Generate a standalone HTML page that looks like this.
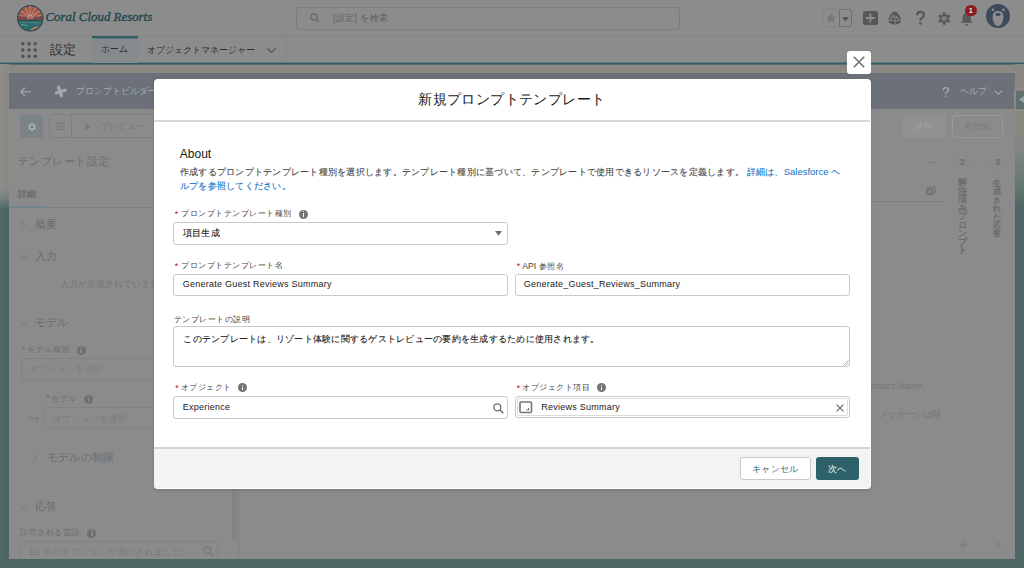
<!DOCTYPE html>
<html><head><meta charset="utf-8">
<style>
*{box-sizing:border-box;margin:0;padding:0}
html,body{width:1024px;height:568px;overflow:hidden}
body{position:relative;background:#8c8c8c;font-family:"Liberation Sans",sans-serif;color:#444}
.a{position:absolute;white-space:nowrap}
svg{position:absolute;overflow:visible}
/* backdrop page (already dimmed colours) */
#hdr{left:0;top:0;width:1024px;height:36px;background:#8c8c8c;border-bottom:1px solid #838383}
#nav{left:0;top:36px;width:1024px;height:29px;background:#8c8c8c}
#pagebg{left:0;top:64px;width:1024px;height:504px;background:linear-gradient(#8a8883 0px,#898782 120px,#6f7a75 135px,#4d6663 150px,#4d6663 504px)}
#leftstrip{left:0;top:64px;width:9px;height:504px;background:linear-gradient(90deg,rgba(255,255,255,.03),rgba(255,255,255,0) 4px),linear-gradient(#8c8a86 0,#8b8985 124px,#7a827f 133px,#5e726e 140px,#4e6663 145px,#4d6663 504px)}
#rightstrip{left:1015px;top:64px;width:9px;height:504px;background:linear-gradient(#8a8883 0,#898782 68px,#828581 85px,#717e7a 105px,#617470 125px,#526a66 138px,#4d6663 146px,#4d6663 504px)}
#builder{left:8.5px;top:73px;width:1006.5px;height:486px;background:#8b8b8b}
#bhdr{left:8.5px;top:73px;width:1006.5px;height:36px;background:#6b7079}
.dimtxt{color:#6c6c6c}
.btxt{color:#a9abae}
/* modal */
#modal{left:153.8px;top:79px;width:716.8px;height:409.5px;background:#fff;border-radius:4px;overflow:hidden;box-shadow:0 1px 3px rgba(0,0,0,.15)}
#mhdr{left:0;top:0;width:716px;height:43px;border-bottom:2px solid #d8d8d8}
#mfoot{left:0;top:367.8px;width:716.5px;height:41.7px;background:#f3f3f3;border-top:2px solid #d3d3d3}
.lbl{font-size:8px;letter-spacing:.5px;color:#444;line-height:10px}
.L{letter-spacing:0;font-size:8.6px}
.j9{font-size:9px;letter-spacing:.25px}
.e{font-size:9.5px;letter-spacing:0}
.req{color:#ba0517;font-size:8.6px;margin-top:1px}
.inp{position:absolute;border:1px solid #c9c9c9;border-radius:3px;background:#fff}
.val{font-size:9px;letter-spacing:.25px;color:#181818;line-height:12px}
.info{position:absolute;width:9px;height:9px;border-radius:50%;background:#747474}
.info:after{content:"";position:absolute;left:3.9px;top:3.6px;width:1.3px;height:3.5px;background:#fff}
.info:before{content:"";position:absolute;left:3.9px;top:1.8px;width:1.3px;height:1.2px;background:#fff}
.bi:before,.bi:after{background:#8b8b8b}
#modal .j9,#modal .val{-webkit-text-stroke:.1px currentColor}
#modal .e{-webkit-text-stroke:0}
</style></head><body>

<!-- ===== Global header ===== -->
<div id="hdr" class="a"></div>
<div id="nav" class="a"></div>
<div id="pagebg" class="a"></div>
<div class="a" style="left:0;top:62px;width:1024px;height:3px;background:linear-gradient(#5b7b7f 0,#5b7b7f 1px,#2f5d63 1px,#2f5d63 2px,#4f6f72 2px)"></div>
<div id="leftstrip" class="a"></div>
<div id="rightstrip" class="a"></div>

<!-- logo -->
<svg style="left:17px;top:4.5px" width="26.5" height="26.5" viewBox="0 0 26 26">
  <defs><clipPath id="lc"><circle cx="13" cy="13" r="12"/></clipPath></defs>
  <circle cx="13" cy="13" r="12.8" fill="#2f4d52"/>
  <g clip-path="url(#lc)">
  <rect x="0" y="0" width="26" height="15" fill="#a45547"/>
  <g stroke="#b98073" stroke-width="1.3">
   <path d="M13 12L13 0M13 12L7 1M13 12L19 1M13 12L2.5 5M13 12L23.5 5M13 12L0 10M13 12L26 10"/>
  </g>
  <path d="M0 12 q3-3 5 0 q2-2 4 0 L9 15 L0 15Z" fill="#7c4a45"/>
  <path d="M26 12 q-3-3 -5 0 q-2-2 -4 0 L17 15 L26 15Z" fill="#7c4a45"/>
  <path d="M8.5 14.5 A4.5 4.5 0 0 1 17.5 14.5 Z" fill="#b76a5c" stroke="#2f4d52" stroke-width="0.8"/>
  <path d="M10.5 12 A2.6 2.6 0 0 1 15.5 12" stroke="#c9a898" stroke-width="1" fill="none"/>
  <rect x="0" y="14.6" width="26" height="1.1" fill="#2f4d52"/>
  <rect x="0" y="15.7" width="26" height="11" fill="#2f6b6c"/>
  <path d="M2 17.3H24" stroke="#4f8a87" stroke-width="0.8"/>
  <path d="M3 21 q2-3 4.5-1.5 q1.5 1.5 3.5 0.5" stroke="#5f9590" stroke-width="1" fill="none"/>
  <path d="M12 26 q4-5 9-5 q3 0 5-2 V26Z" fill="#a85b4f"/>
  <path d="M13 25 q4-3.5 8-3.5" stroke="#c0a497" stroke-width="0.9" fill="none"/>
  </g>
  <circle cx="13" cy="13" r="12.4" fill="none" stroke="#2f4d52" stroke-width="1"/>
</svg>
<div class="a" style="left:45.5px;top:10px;font-family:'Liberation Serif',serif;font-style:italic;font-size:12.9px;line-height:15px;color:#22484d;-webkit-text-stroke:.35px #22484d">Coral Cloud Resorts</div>

<!-- search -->
<div class="a" style="left:296px;top:6.5px;width:384px;height:23px;border:1px solid #7e7e7e;border-radius:3px;background:#8c8c8c"></div>
<svg style="left:310px;top:12.5px" width="10" height="10" viewBox="0 0 10 10"><circle cx="4" cy="4" r="3.2" fill="none" stroke="#666" stroke-width="1.2"/><path d="M6.3 6.3 L9 9" stroke="#666" stroke-width="1.3"/></svg>
<div class="a" style="left:333px;top:12px;font-size:9px;letter-spacing:.35px;line-height:12px;color:#5f5f5f">[設定] を検索</div>

<!-- right icons -->
<div class="a" style="left:823px;top:9px;width:29px;height:18px;border:1px solid #858585;border-radius:3px"></div>
<div class="a" style="left:839px;top:9px;width:13px;height:18px;border:1px solid #707070;border-radius:0 3px 3px 0"></div>
<svg style="left:825.3px;top:12px" width="12" height="11.5" viewBox="0 0 24 23"><path d="M12 1.5l3.2 7.1 7.6.7-5.8 5.1 1.8 7.5L12 18l-6.8 3.9 1.8-7.5L1.2 9.3l7.6-.7z" fill="#777"/></svg>
<svg style="left:842px;top:16.5px" width="7" height="5" viewBox="0 0 7 5"><path d="M0 0H7L3.5 4.5Z" fill="#555"/></svg>
<div class="a" style="left:863px;top:10.8px;width:14.7px;height:14px;background:#575757;border-radius:2.5px"></div>
<svg style="left:863px;top:10.8px" width="15" height="14" viewBox="0 0 15 14"><path d="M7.35 2.5V11.5M2.8 7H11.9" stroke="#8c8c8c" stroke-width="1.8"/></svg>
<svg style="left:888px;top:11px" width="13.5" height="14" viewBox="0 0 14 14"><path d="M7 0.3 C9.5 0.3 13.5 5.5 13.5 9.8 C13.5 12.5 10.5 13.7 7 13.7 C3.5 13.7 0.5 12.5 0.5 9.8 C0.5 5.5 4.5 0.3 7 0.3Z" fill="#575757"/><path d="M2.3 8.6 L5.2 4.2 L7.3 7.2 L8.8 5.6 L11.7 8.6" stroke="#8c8c8c" stroke-width="1.1" fill="none"/><path d="M0 9.4H14" stroke="#8c8c8c" stroke-width="0.9"/><path d="M7.2 9.4 L7.9 11.4 L7.1 14" stroke="#8c8c8c" stroke-width="0.8" fill="none"/></svg>
<svg style="left:916px;top:11px" width="9" height="14" viewBox="0 0 9 14"><path d="M1.2 4.2 C1.2 2 2.8 0.9 4.5 0.9 C6.4 0.9 7.9 2.1 7.9 4 C7.9 6.3 5 6.6 4.5 8.6 V9.6" stroke="#575757" stroke-width="2.2" fill="none"/><circle cx="4.5" cy="12.4" r="1.3" fill="#575757"/></svg>
<svg style="left:937.5px;top:12px" width="12.5" height="13" viewBox="0 0 24 24"><g fill="#595959"><circle cx="12" cy="12" r="8.3"/><rect x="9.3" y="0" width="5.4" height="5" rx="1"/><rect x="9.3" y="19" width="5.4" height="5" rx="1"/><rect x="9.3" y="0" width="5.4" height="5" rx="1" transform="rotate(60 12 12)"/><rect x="9.3" y="0" width="5.4" height="5" rx="1" transform="rotate(120 12 12)"/><rect x="9.3" y="0" width="5.4" height="5" rx="1" transform="rotate(240 12 12)"/><rect x="9.3" y="0" width="5.4" height="5" rx="1" transform="rotate(300 12 12)"/></g><circle cx="12" cy="12" r="4.6" fill="#8c8c8c"/><path d="M13.8 9.8c-.4-.6-1-.9-1.8-.9-1 0-1.7.5-1.7 1.3 0 1.8 3.5 1 3.5 2.9 0 .8-.7 1.4-1.8 1.4-.8 0-1.5-.3-1.9-1M12 7.8v1M12 14.5v1" stroke="#595959" stroke-width="1.1" fill="none"/></svg>
<svg style="left:960px;top:11.5px" width="13.5" height="14" viewBox="0 0 14 14"><path d="M7 0.8c-2.6 0-4.3 2-4.3 4.6v3.3L0.7 11H13.3l-2-2.3V5.4C11.3 2.8 9.6 0.8 7 0.8z" fill="#595959"/><path d="M5.3 12.3h3.4a1.7 1.7 0 0 1-3.4 0z" fill="#595959"/></svg>
<div class="a" style="left:965px;top:4.8px;width:11.7px;height:11.7px;border-radius:50%;background:#8b1c1c"></div>
<div class="a" style="left:965px;top:5.5px;width:11.7px;text-align:center;font-size:8px;line-height:10px;font-weight:bold;color:#ddd">1</div>
<svg style="left:986px;top:4px" width="24" height="24" viewBox="0 0 24 24"><circle cx="12" cy="12" r="12" fill="#3d4a5b"/><path d="M12 7.1 C15.6 7.1 17.4 9 17.4 12.5 C17.4 17.5 15 22.1 12 22.1 C9 22.1 6.6 17.5 6.6 12.5 C6.6 9 8.4 7.1 12 7.1Z" fill="#8c8c8c"/><ellipse cx="12" cy="10.4" rx="2.8" ry="1.5" fill="#3d4a5b"/><circle cx="6.9" cy="5.8" r="1.3" fill="#8c8c8c"/><circle cx="17.3" cy="5.8" r="1.3" fill="#8c8c8c"/></svg>

<!-- nav -->
<svg style="left:21px;top:42px" width="16" height="16" viewBox="0 0 16 16" fill="#505050"><circle cx="1.8" cy="1.8" r="1.7"/><circle cx="8" cy="1.8" r="1.7"/><circle cx="14.2" cy="1.8" r="1.7"/><circle cx="1.8" cy="8" r="1.7"/><circle cx="8" cy="8" r="1.7"/><circle cx="14.2" cy="8" r="1.7"/><circle cx="1.8" cy="14.2" r="1.7"/><circle cx="8" cy="14.2" r="1.7"/><circle cx="14.2" cy="14.2" r="1.7"/></svg>
<div class="a" style="left:49.5px;top:42px;font-size:12.6px;line-height:16px;color:#2e2e2e">設定</div>
<div class="a" style="left:92px;top:36px;width:46px;height:26.5px;background:linear-gradient(#2f5d63 0,#2f5d63 2px,#587a7e 2px,#587a7e 3px,#858a8d 3px)"></div>
<div class="a" style="left:101px;top:43.3px;font-size:9.2px;line-height:12px;color:#2e2e2e">ホーム</div>
<div class="a" style="left:146.5px;top:43.5px;font-size:9.2px;line-height:12px;color:#2e2e2e">オブジェクトマネージャー</div>
<svg style="left:267px;top:47.5px" width="9" height="5" viewBox="0 0 9 5"><path d="M0.5 0.5 L4.5 4.5 L8.5 0.5" stroke="#505050" stroke-width="1.1" fill="none"/></svg>
<div class="a" style="left:285.5px;top:36px;width:1px;height:26.5px;background:#838383"></div>

<!-- ===== Builder ===== -->
<div id="builder" class="a"></div>
<div id="bhdr" class="a"></div>
<svg style="left:20px;top:87px" width="11.5" height="9.5" viewBox="0 0 12 10"><path d="M11.5 5H1M5 0.7L0.9 5 5 9.3" stroke="#adaeb1" stroke-width="1.3" fill="none"/></svg>
<svg style="left:54px;top:84px" width="14" height="14" viewBox="0 0 14 14"><path d="M6 8L4.6 3.2M6 8L2.4 8.8M6 8L7.6 11.8M6 8L11.2 6.2" stroke="#a3a5a8" stroke-width="3.2" stroke-linecap="round"/><circle cx="6.5" cy="7.8" r="2.6" fill="#a3a5a8"/></svg>
<div class="a btxt" style="left:76px;top:85px;font-size:9.3px;line-height:12px">プロンプトビルダー</div>
<svg style="left:942px;top:86.5px" width="7.5" height="10.5" viewBox="0 0 9 14"><path d="M1.2 4.2 C1.2 2 2.8 0.9 4.5 0.9 C6.4 0.9 7.9 2.1 7.9 4 C7.9 6.3 5 6.6 4.5 8.6 V9.6" stroke="#a9abae" stroke-width="1.7" fill="none"/><circle cx="4.5" cy="12.3" r="1.1" fill="#a9abae"/></svg>
<div class="a btxt" style="left:960px;top:85px;font-size:9.3px;line-height:12px">ヘルプ</div>
<svg style="left:994px;top:89.5px" width="8.5" height="5" viewBox="0 0 9 5"><path d="M0.5 0.5 L4.5 4.5 L8.5 0.5" stroke="#adaeb1" stroke-width="1.1" fill="none"/></svg>

<!-- collapse tab right -->
<div class="a" style="left:1013.5px;top:88px;width:11px;height:23px;border:1px solid #8f8f8b;border-radius:3px 0 0 3px;background:#878681"></div>
<div class="a" style="left:1016px;top:90.5px;width:8px;height:18px;background:#5f706e"></div>
<svg style="left:1019px;top:96px" width="5" height="7" viewBox="0 0 5 7"><path d="M5 0V7L0 3.5Z" fill="#9aa3a1"/></svg>

<!-- toolbar -->
<div class="a" style="left:20.3px;top:114.8px;width:22.7px;height:22.8px;background:#7a8387;border-radius:3px"></div>
<svg style="left:26.5px;top:121.5px" width="10" height="10" viewBox="0 0 24 24"><g fill="#abb1b4"><circle cx="12" cy="12" r="7.5"/><path d="M12 0.5L15.5 6.5H8.5Z"/><path d="M12 23.5L15.5 17.5H8.5Z"/><path d="M12 0.5L15.5 6.5H8.5Z" transform="rotate(60 12 12)"/><path d="M12 0.5L15.5 6.5H8.5Z" transform="rotate(120 12 12)"/><path d="M12 0.5L15.5 6.5H8.5Z" transform="rotate(240 12 12)"/><path d="M12 0.5L15.5 6.5H8.5Z" transform="rotate(300 12 12)"/></g><circle cx="12" cy="12" r="4.2" fill="#7a8387"/></svg>
<div class="a" style="left:48.9px;top:114.2px;width:120px;height:23.6px;border:1px solid #808080;border-radius:3px"></div>
<div class="a" style="left:70.9px;top:114.3px;width:1px;height:23.5px;background:#7f7f7f"></div>
<svg style="left:56px;top:121.5px" width="9" height="9" viewBox="0 0 9 9"><path d="M0 1.5H9M0 4.5H9M0 7.5H9" stroke="#777" stroke-width="0.8"/><path d="M2.5 0.5V2.5M6 3.5V5.5M3.5 6.5V8.5" stroke="#777" stroke-width="1.4"/></svg>
<svg style="left:85px;top:123px" width="6.3" height="7.6" viewBox="0 0 6 8"><path d="M0 0L6 4L0 8Z" fill="#7a7a7a"/></svg>
<div class="a dimtxt" style="left:100px;top:119.5px;font-size:9.3px;line-height:12px;color:#7a7a7a">プレビュー</div>

<div class="a" style="left:903.4px;top:115px;width:42.6px;height:22.7px;background:#919191;border-radius:3px"></div>
<div class="a" style="left:914px;top:120px;font-size:9.3px;line-height:12px;color:#a0a0a0">保存</div>
<div class="a" style="left:952.4px;top:115px;width:51px;height:22.7px;border:1px solid #999;border-radius:3px"></div>
<div class="a" style="left:964px;top:120px;font-size:9.3px;line-height:12px;color:#7a7a7a">有効化</div>

<!-- left panel -->
<div class="a dimtxt" style="left:17.5px;top:153.5px;font-size:11px;letter-spacing:.5px;line-height:14px">テンプレート設定</div>
<div class="a dimtxt" style="left:18px;top:189px;font-size:9px;line-height:11px;font-weight:bold">詳細</div>
<div class="a" style="left:8.5px;top:206.5px;width:229px;height:1px;background:#7f7f7f"></div>
<div class="a" style="left:8.5px;top:206px;width:36px;height:1.5px;background:#6f8589"></div>
<svg style="left:19.5px;top:220px" width="6" height="9" viewBox="0 0 6 9"><path d="M0.6 0.5L5.2 4.5 0.6 8.5" stroke="#777" stroke-width="1" fill="none"/></svg>
<div class="a dimtxt" style="left:35px;top:216.5px;font-size:11.4px;line-height:14px">概要</div>
<svg style="left:18.5px;top:254px" width="9.5" height="6" viewBox="0 0 10 6"><path d="M0.5 0.6L5 5.2 9.5 0.6" stroke="#777" stroke-width="1" fill="none"/></svg>
<div class="a dimtxt" style="left:35px;top:248.8px;font-size:11.4px;line-height:14px">入力</div>
<div class="a dimtxt" style="left:59.5px;top:278px;font-size:9.3px;line-height:12px;color:#747474">入力が定義されていません</div>
<svg style="left:18.5px;top:320px" width="9.5" height="6" viewBox="0 0 10 6"><path d="M0.5 0.6L5 5.2 9.5 0.6" stroke="#777" stroke-width="1" fill="none"/></svg>
<div class="a dimtxt" style="left:35px;top:314.5px;font-size:11.4px;line-height:14px">モデル</div>
<div class="a" style="left:22px;top:344px;font-size:8.6px;line-height:10px;color:#8a5a5a">*</div>
<div class="a dimtxt" style="left:27px;top:345px;font-size:8px;letter-spacing:.5px;line-height:10px">モデル種別</div>
<div class="info bi" style="left:76.6px;top:345.5px;background:#6f6f6f"></div>
<div class="a" style="left:20.6px;top:358px;width:140px;height:22.5px;border:1px solid #818181;border-radius:3px"></div>
<div class="a" style="left:28.5px;top:362.5px;font-size:9px;letter-spacing:.4px;line-height:12px;color:#7c7c7c">オプションを選択</div>
<div class="a" style="left:46.5px;top:393px;font-size:8.6px;line-height:10px;color:#8a5a5a">*</div>
<div class="a dimtxt" style="left:51px;top:394px;font-size:8px;letter-spacing:.5px;line-height:10px">モデル</div>
<div class="info bi" style="left:84.2px;top:394.5px;background:#6f6f6f"></div>
<svg style="left:29px;top:414.5px" width="11" height="7" viewBox="0 0 11 7"><path d="M0.5 0V3.5H9.5M7 1L9.8 3.5 7 6" stroke="#777" stroke-width="1" fill="none"/></svg>
<div class="a" style="left:44.4px;top:407.3px;width:120px;height:22px;border:1px solid #818181;border-radius:3px"></div>
<div class="a" style="left:52.5px;top:412.5px;font-size:9px;letter-spacing:.4px;line-height:12px;color:#7c7c7c">オプションを選択</div>
<svg style="left:32px;top:454px" width="6" height="9" viewBox="0 0 6 9"><path d="M0.6 0.5L5.2 4.5 0.6 8.5" stroke="#777" stroke-width="1" fill="none"/></svg>
<div class="a dimtxt" style="left:46.7px;top:450px;font-size:11px;letter-spacing:.3px;line-height:14px">モデルの制限</div>
<svg style="left:19px;top:503.5px" width="8" height="5.5" viewBox="0 0 10 6"><path d="M0.5 0.6L5 5.2 9.5 0.6" stroke="#777" stroke-width="1.2" fill="none"/></svg>
<div class="a dimtxt" style="left:35.4px;top:498.5px;font-size:11.4px;line-height:14px">応答</div>
<div class="a dimtxt" style="left:20px;top:528px;font-size:8px;letter-spacing:.5px;line-height:10px">許可される言語</div>
<div class="info bi" style="left:87.4px;top:528.5px;background:#6f6f6f"></div>
<div class="a" style="left:20px;top:541.3px;width:198px;height:30px;border:1px solid #818181;border-radius:3px"></div>
<div class="a" style="left:29px;top:545.5px;font-size:9px;letter-spacing:.3px;line-height:12px;color:#7c7c7c">10 件のオプションが選択されました</div>
<svg style="left:202.5px;top:546px" width="10.5" height="10.5" viewBox="0 0 10 10"><circle cx="4" cy="4" r="3.2" fill="none" stroke="#777" stroke-width="1.1"/><path d="M6.3 6.3 L9.5 9.5" stroke="#777" stroke-width="1.2"/></svg>
<div class="a" style="left:232.2px;top:470px;width:4.5px;height:69.5px;background:#838383;border-radius:2px"></div>
<div class="a" style="left:238px;top:109px;width:1px;height:450px;background:#7f7f7f"></div>

<!-- right side -->
<div class="a" style="left:927px;top:161.5px;width:8.5px;height:1.2px;background:#7a7a7a"></div>
<svg style="left:926px;top:186px" width="10" height="9" viewBox="0 0 10 9"><rect x="0.6" y="2.6" width="6.5" height="6" rx="1" fill="#767676" stroke="#737373" stroke-width="1.2"/><rect x="3" y="0.6" width="6.4" height="6" rx="1" fill="none" stroke="#737373" stroke-width="1.1"/><rect x="2.2" y="4.2" width="3.4" height="2.8" fill="#858585"/></svg>
<div class="a" style="left:870px;top:201px;width:75px;height:1px;background:#7f7f7f"></div>
<div class="a" style="left:955px;top:154.5px;width:15px;height:15px;border:1px dashed #858585;border-radius:50%"></div>
<div class="a" style="left:955px;top:156.5px;width:15px;text-align:center;font-size:9px;line-height:11px;font-weight:bold;color:#6e6e6e">2</div>
<div class="a" style="left:990px;top:154.5px;width:15px;height:15px;border:1px dashed #858585;border-radius:50%"></div>
<div class="a" style="left:990px;top:156.5px;width:15px;text-align:center;font-size:9px;line-height:11px;font-weight:bold;color:#6e6e6e">3</div>
<div class="a" style="left:957.5px;top:178px;width:10px;font-size:8.5px;line-height:8.5px;white-space:normal;color:#6a6a6a;-webkit-text-stroke:.3px #6a6a6a;word-break:break-all">解決済みプロンプト</div>
<div class="a" style="left:992.5px;top:179px;width:10px;font-size:8.4px;line-height:8.4px;white-space:normal;color:#6a6a6a;-webkit-text-stroke:.3px #6a6a6a;word-break:break-all">生成された応答</div>
<div class="a" style="left:863px;top:380px;font-size:9.3px;line-height:12px;font-style:italic;color:#767676">Contact.Name、</div>
<div class="a" style="left:867.5px;top:407.5px;font-size:9px;letter-spacing:-.2px;line-height:12px;font-style:italic;color:#767676">、 メッセージは熱</div>
<svg style="left:958.5px;top:540.5px" width="8" height="8" viewBox="0 0 8 8"><path d="M4 0V8M0 4H8" stroke="#7a7a7a" stroke-width="1"/></svg>
<svg style="left:993.8px;top:540.5px" width="8" height="8" viewBox="0 0 8 8"><path d="M4 0V8M0 4H8" stroke="#7a7a7a" stroke-width="1"/></svg>

<div class="a" style="left:0;top:559px;width:1024px;height:9px;background:#4d6663"></div>
<!-- ===== Modal ===== -->
<div class="a" style="left:847px;top:50.5px;width:23.5px;height:23px;background:#fff;border-radius:3px"></div>
<svg style="left:853px;top:56px" width="12" height="12" viewBox="0 0 12 12"><path d="M0.8 0.8L11.2 11.2M11.2 0.8L0.8 11.2" stroke="#707070" stroke-width="1.6"/></svg>

<div id="modal" class="a">
  <div id="mhdr" class="a"></div>
  <div class="a" style="left:0;top:11px;width:716px;text-align:center;font-size:14px;letter-spacing:.4px;line-height:18px;color:#181818">新規プロンプトテンプレート</div>

  <div class="a" style="left:26px;top:68px;font-size:12px;line-height:14px;color:#181818">About</div>
  <div class="a j9" style="left:26px;top:85.8px;line-height:14px;color:#444">作成するプロンプトテンプレート種別を選択します。テンプレート種別に基づいて、テンプレートで使用できるリソースを定義します。<span class="e"> </span><span style="color:#0b6fc7">詳細は、<span class="e">Salesforce </span>ヘ<br>ルプを参照してください。</span></div>

  <!-- field 1 -->
  <div class="a req" style="left:21px;top:129px">*</div>
  <div class="a lbl" style="left:27.5px;top:130px">プロンプトテンプレート種別</div>
  <div class="info" style="left:145.5px;top:130.5px"></div>
  <div class="inp" style="left:19.5px;top:142.5px;width:335px;height:23px"></div>
  <div class="a val" style="left:29px;top:147.5px">項目生成</div>
  <svg style="left:341px;top:152.3px" width="7" height="5" viewBox="0 0 7 5"><path d="M0 0H7L3.5 4.7Z" fill="#706e6b"/></svg>

  <!-- field 2 -->
  <div class="a req" style="left:21px;top:181px">*</div>
  <div class="a lbl" style="left:27.5px;top:182px">プロンプトテンプレート名</div>
  <div class="inp" style="left:19.5px;top:194.5px;width:335px;height:22.5px"></div>
  <div class="a val e" style="left:29px;top:199px">Generate Guest Reviews Summary</div>
  <div class="a req" style="left:363px;top:181px">*</div>
  <div class="a lbl" style="left:368.5px;top:182px"><span class="L">API </span>参照名</div>
  <div class="inp" style="left:361px;top:194.5px;width:335.5px;height:22.5px"></div>
  <div class="a val e" style="left:370px;top:199px">Generate_Guest_Reviews_Summary</div>

  <!-- field 3 -->
  <div class="a lbl" style="left:20px;top:235.5px">テンプレートの説明</div>
  <div class="inp" style="left:19.5px;top:247px;width:677px;height:40.5px"></div>
  <div class="a val" style="left:29.5px;top:253.5px">このテンプレートは、リゾート体験に関するゲストレビューの要約を生成するために使用されます。</div>
  <svg style="left:689px;top:280.5px" width="6" height="6" viewBox="0 0 6 6"><path d="M0.5 5.5L5.5 0.5M3 5.5L5.5 3" stroke="#9a9a9a" stroke-width="0.8"/></svg>

  <!-- field 4 -->
  <div class="a req" style="left:21.5px;top:303px">*</div>
  <div class="a lbl" style="left:27px;top:304px">オブジェクト</div>
  <div class="info" style="left:84.5px;top:304px"></div>
  <div class="inp" style="left:19.5px;top:316.5px;width:335px;height:23px"></div>
  <div class="a val e" style="left:29px;top:321.5px">Experience</div>
  <svg style="left:339.5px;top:324px" width="11" height="11" viewBox="0 0 11 11"><circle cx="4.3" cy="4.3" r="3.5" fill="none" stroke="#706e6b" stroke-width="1.3"/><path d="M6.9 6.9 L10.3 10.3" stroke="#706e6b" stroke-width="1.5"/></svg>

  <div class="a req" style="left:363px;top:303px">*</div>
  <div class="a lbl" style="left:368.5px;top:304px">オブジェクト項目</div>
  <div class="info" style="left:443px;top:304px"></div>
  <div class="inp" style="left:361px;top:316.5px;width:335.5px;height:22.5px;border-color:#c9c9c9"></div>
  <div class="a" style="left:363px;top:318.5px;width:331.5px;height:18.5px;border:1px solid #dddbda;border-radius:2px"></div>
  <svg style="left:365px;top:322px" width="13.5" height="12.5" viewBox="0 0 13.5 12.5"><rect x="1" y="1" width="11.5" height="10.5" rx="1" fill="none" stroke="#747474" stroke-width="1.6"/><path d="M7.5 9H9.5V7" stroke="#747474" stroke-width="1.2" fill="none"/></svg>
  <div class="a val e" style="left:387.5px;top:321.5px">Reviews Summary</div>
  <svg style="left:682px;top:324.5px" width="8" height="8" viewBox="0 0 8 8"><path d="M0.6 0.6L7.4 7.4M7.4 0.6L0.6 7.4" stroke="#706e6b" stroke-width="1.3"/></svg>

  <!-- footer -->
  <div id="mfoot" class="a"></div>
  <div class="a" style="left:586.3px;top:378.3px;width:70.5px;height:23px;background:#fff;border:1px solid #c9c9c9;border-radius:3px"></div>
  <div class="a" style="left:586.3px;top:383.5px;width:70.5px;text-align:center;font-size:9px;letter-spacing:.25px;line-height:12px;color:#2e6a73">キャンセル</div>
  <div class="a" style="left:662px;top:378.3px;width:43px;height:23px;background:#2d626b;border-radius:3px"></div>
  <div class="a" style="left:662px;top:383.5px;width:43px;text-align:center;font-size:9px;letter-spacing:.25px;line-height:12px;color:#fff">次へ</div>
</div>

</body></html>
